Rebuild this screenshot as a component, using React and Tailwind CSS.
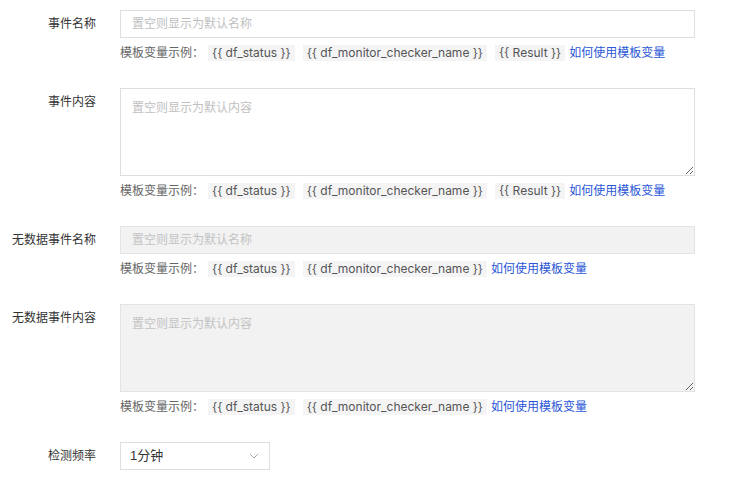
import React from "react";

const font = { fontFamily: '"Liberation Sans", "Noto Sans CJK SC", sans-serif' };
const tagFont = { fontFamily: 'Inter, "Noto Sans CJK SC", sans-serif' };

function Tag({ children }) {
  return (
    <span
      className="inline-flex h-[16px] items-center bg-[#f4f4f5] px-[4px] text-[12px] leading-[16px] text-[#555]"
      style={tagFont}
    >
      {children}
    </span>
  );
}

function Help({ result }) {
  return (
    <div className="mt-[7px] flex h-[16px] items-center text-[12px] leading-[16px] text-[#666]">
      <span className="mr-[4px]">模板变量示例：</span>
      <div className="flex items-center gap-[8px]">
        <Tag>{"{{ df_status }}"}</Tag>
        <Tag>{"{{ df_monitor_checker_name }}"}</Tag>
        {result && <Tag>{"{{ Result }}"}</Tag>}
      </div>
      <a className="ml-[4px] text-[#2b56d6]" href="#">
        如何使用模板变量
      </a>
    </div>
  );
}

function Row({ label, children, last }) {
  return (
    <div className={"flex " + (last ? "" : "mb-[27px]")}>
      <div className="w-[96px] shrink-0 text-right text-[12px] leading-[28px] text-[#333]">
        {label}
      </div>
      <div className="ml-[24px] w-[575px]">{children}</div>
    </div>
  );
}

export default function App() {
  return (
    <div className="min-h-[484px] w-[746px] bg-white pt-[10px]" style={font}>
      <Row label="事件名称">
        <input
          className="block h-[28px] w-full border border-[#dedede] bg-white px-[11px] text-[12px] text-[#333] outline-none placeholder:text-[#bfbfbf]"
          placeholder="置空则显示为默认名称"
        />
        <Help result />
      </Row>
      <Row label="事件内容">
        <textarea
          className="block h-[88px] w-full border border-[#dedede] bg-white px-[11px] pt-[9px] text-[12px] leading-[20px] text-[#333] outline-none placeholder:text-[#bfbfbf]"
          placeholder="置空则显示为默认内容"
        />
        <Help result />
      </Row>
      <Row label="无数据事件名称">
        <input
          disabled
          className="block h-[28px] w-full border border-[#e3e3e3] bg-[#f2f2f2] px-[11px] text-[12px] text-[#333] outline-none placeholder:text-[#c3c3c3]"
          placeholder="置空则显示为默认名称"
        />
        <Help />
      </Row>
      <Row label="无数据事件内容">
        <textarea
          readOnly
          className="block h-[88px] w-full border border-[#e3e3e3] bg-[#f2f2f2] px-[11px] pt-[9px] text-[12px] leading-[20px] text-[#333] outline-none placeholder:text-[#c3c3c3]"
          placeholder="置空则显示为默认内容"
        />
        <Help />
      </Row>
      <Row label="检测频率" last>
        <div className="flex h-[28px] w-[150px] items-center justify-between border border-[#dedede] bg-white pl-[9px] pr-[10px] text-[13px] text-[#333]">
          <span>1分钟</span>
          <svg width="10" height="6" viewBox="0 0 10 6" fill="none">
            <path d="M1 1l4 4 4-4" stroke="#a8a8a8" strokeWidth="1" />
          </svg>
        </div>
      </Row>
    </div>
  );
}
